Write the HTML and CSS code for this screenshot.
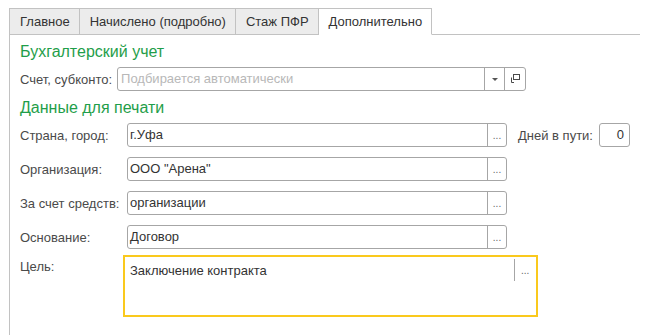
FILE: index.html
```html
<!DOCTYPE html>
<html lang="ru">
<head>
<meta charset="utf-8">
<link rel="stylesheet" href="styles.css">
</head>
<body>
<div class="page">
  <div class="tabs">
    <div class="tab first">Главное</div>
    <div class="tab">Начислено (подробно)</div>
    <div class="tab">Стаж ПФР</div>
    <div class="tab active">Дополнительно</div>
    <div class="tab-fill"></div>
  </div>
  <div class="panel">
    <div class="group-title t1">Бухгалтерский учет</div>
    <div class="row r1">
      <div class="label auto">Счет, субконто:</div>
      <div class="field wide">
        <div class="value placeholder">Подбирается автоматически</div>
        <div class="btn drop"><span class="arrow"></span></div>
        <div class="btn open">
          <svg width="10" height="10" viewBox="0 0 10 10"><rect x="3.5" y="0.5" width="6" height="5" fill="none" stroke="#4a4a4a" stroke-width="1"/><path d="M1.5 3.5 V8.5 H4" fill="none" stroke="#4a4a4a" stroke-width="1"/></svg>
        </div>
      </div>
    </div>
    <div class="group-title t2">Данные для печати</div>
    <div class="row r2">
      <div class="label">Страна, город:</div>
      <div class="field std">
        <div class="value">г.Уфа</div>
        <div class="btn dots">...</div>
      </div>
      <div class="label days">Дней в пути:</div>
      <div class="field small"><div class="value num">0</div></div>
    </div>
    <div class="row rn">
      <div class="label">Организация:</div>
      <div class="field std">
        <div class="value">ООО "Арена"</div>
        <div class="btn dots">...</div>
      </div>
    </div>
    <div class="row rn">
      <div class="label">За счет средств:</div>
      <div class="field std">
        <div class="value">организации</div>
        <div class="btn dots">...</div>
      </div>
    </div>
    <div class="row rn">
      <div class="label">Основание:</div>
      <div class="field std">
        <div class="value">Договор</div>
        <div class="btn dots">...</div>
      </div>
    </div>
    <div class="row rt">
      <div class="label tlabel">Цель:</div>
      <div class="textarea">
        <div class="tvalue">Заключение контракта</div>
        <div class="tbtn">...</div>
      </div>
    </div>
  </div>
</div>
</body>
</html>
```

FILE: styles.css
```css
html, body {
  margin: 0;
  padding: 0;
  background: #ffffff;
}
body {
  font-family: "Liberation Sans", Arial, sans-serif;
  font-size: 13px;
  color: #4a4a4a;
  overflow: hidden;
  height: 335px;
}
.page {
  width: 631px;
  margin-left: 9px;
  padding-top: 8px;
}
.tabs {
  display: flex;
  height: 27px;
}
.tab {
  box-sizing: border-box;
  height: 27px;
  padding: 0 9px 0 10px;
  line-height: 25px;
  background: #ececec;
  color: #333333;
  border-top: 1px solid #c2c2c2;
  border-right: 1px solid #c2c2c2;
  border-bottom: 1px solid #c2c2c2;
  white-space: nowrap;
}
.tab.first {
  border-left: 1px solid #c2c2c2;
}
.tab.active {
  background: #ffffff;
  border-bottom-color: #ffffff;
}
.tab-fill {
  flex: 1;
  border-bottom: 1px solid #c2c2c2;
}
.panel {
  border-left: 1px solid #c2c2c2;
  padding-left: 10px;
  height: 300px;
  display: flex;
  flex-direction: column;
}
.group-title {
  font-size: 16px;
  line-height: 20px;
  color: #1f9e4a;
  white-space: nowrap;
}
.t1 { margin-top: 7px; }
.t2 { margin-top: 7px; }
.row {
  display: flex;
  align-items: center;
  height: 24px;
}
.r1 { margin-top: 5px; }
.r2 { margin-top: 5px; }
.rn { margin-top: 10px; }
.rt {
  margin-top: 6px;
  height: auto;
  align-items: flex-start;
}
.label {
  width: 107px;
  flex: none;
  white-space: nowrap;
  color: #4a4a4a;
}
.label.auto {
  width: auto;
  margin-right: 5px;
}
.label.days {
  width: auto;
  margin-left: 11px;
  margin-right: 6px;
}
.label.tlabel {
  width: 103px;
  margin-top: 4px;
}
.field {
  box-sizing: border-box;
  height: 24px;
  border: 1px solid #a6a6a6;
  border-radius: 3px;
  display: flex;
  align-items: stretch;
  background: #ffffff;
  flex: none;
}
.field.wide { width: 409px; }
.field.std { width: 380px; }
.field.small { width: 31px; }
.value {
  flex: 1;
  padding-left: 2px;
  line-height: 22px;
  color: #333333;
  white-space: nowrap;
  overflow: hidden;
}
.value.placeholder {
  padding-left: 3px;
  color: #b8b8b8;
}
.value.num {
  text-align: right;
  padding-right: 5px;
  padding-left: 0;
}
.btn {
  border-left: 1px solid #a6a6a6;
  display: flex;
  align-items: center;
  justify-content: center;
  flex: none;
}
.btn.drop { width: 19px; }
.btn.open { width: 20px; }
.btn.dots {
  width: 19px;
  font-size: 10px;
  color: #666666;
  align-items: flex-end;
  padding-bottom: 5px;
  box-sizing: border-box;
  line-height: 10px;
}
.arrow {
  width: 0;
  height: 0;
  border-left: 3px solid transparent;
  border-right: 3px solid transparent;
  border-top: 3px solid #555555;
}
.textarea {
  box-sizing: border-box;
  width: 415px;
  height: 62px;
  border: 2px solid #fac91d;
  display: flex;
  align-items: flex-start;
}
.tvalue {
  flex: 1;
  padding-left: 5px;
  padding-top: 6px;
  line-height: 16px;
  color: #333333;
}
.tbtn {
  margin-top: 2px;
  width: 20px;
  height: 22px;
  border-left: 1px solid #a6a6a6;
  margin-right: 2px;
  font-size: 10px;
  color: #666666;
  box-sizing: border-box;
  padding-left: 6px;
  padding-top: 7px;
  line-height: 10px;
}
```
